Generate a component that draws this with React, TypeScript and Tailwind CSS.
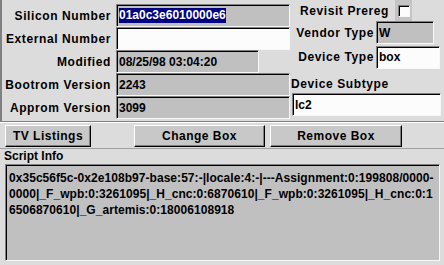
import React from 'react';

// sunken field look: dark top/left, light bottom/right
const sunken =
  'border border-t-[#808080] border-l-[#808080] border-b-[#f8f8f8] border-r-[#f8f8f8] shadow-[inset_1px_1px_0_#000]';
const raised =
  'border border-t-[#ffffff] border-l-[#ffffff] border-b-[#000] border-r-[#000] shadow-[inset_-1px_-1px_0_#808080]';

function Field({ value, width, white, selected }: { value: string; width: string; white?: boolean; selected?: boolean }) {
  return (
    <div className={`${width} h-[23px] ${sunken} ${white ? 'bg-[#fcfcfc]' : 'bg-[#c0c0c0]'} flex items-center pl-[2px]`}>
      {selected ? <span className="bg-[#000080] text-white leading-[15px]">{value}</span> : <span>{value}</span>}
    </div>
  );
}

const leftRows = [
  { label: 'Silicon Number', value: '01a0c3e6010000e6', width: 'w-[174px]', selected: true },
  { label: 'External Number', value: '', width: 'w-[174px]', white: true },
  { label: 'Modified', value: '08/25/98 03:04:20', width: 'w-[143px]' },
  { label: 'Bootrom Version', value: '2243', width: 'w-[174px]' },
  { label: 'Approm Version', value: '3099', width: 'w-[174px]' },
];

export default function App() {
  return (
    <div className="w-[444px] h-[265px] bg-[#dcdcdc] text-black font-bold text-[12px] font-['Liberation_Sans',Arial,sans-serif] overflow-hidden flex flex-col">
      {/* top panel */}
      <div className="flex h-[122px] border-l-2 border-l-[#808080] border-b border-b-[#808080] shadow-[0_1px_0_#fff]">
        <div className="w-[289px] pt-[4px] flex flex-col">
          {leftRows.map((r) => (
            <div key={r.label} className="flex items-center h-[23px]">
              <div className="w-[114px] text-right pr-[5px] tracking-[0.6px]">{r.label}</div>
              <Field value={r.value} width={r.width} white={r.white} selected={r.selected} />
            </div>
          ))}
        </div>
        <div className="flex-1 flex flex-col">
          <div className="flex items-center h-[21px]">
            <div className="w-[104px] text-right pr-[6px] tracking-[0.6px]">Revisit Prereg</div>
            <div className="w-[17px] h-[21px] bg-[#c4c4c4] flex items-center justify-center">
              <div className={`w-[12px] h-[12px] bg-[#fcfcfc] ${sunken}`} />
            </div>
          </div>
          <div className="flex items-center h-[23px]">
            <div className="w-[85px] text-right pr-[2px] tracking-[0.6px]">Vendor Type</div>
            <Field value="W" width="w-[58px]" />
          </div>
          <div className="flex items-center h-[24px] mt-[1px]">
            <div className="w-[85px] text-right pr-[2px] tracking-[0.6px]">Device Type</div>
            <Field value="box" width="w-[64px]" white />
          </div>
          <div className="h-[23px] flex items-center pt-[6px] tracking-[0.6px]">Device Subtype</div>
          <div className="pl-[1px] pt-[1px]">
            <Field value="lc2" width="w-[149px]" white />
          </div>
        </div>
      </div>

      {/* buttons */}
      <div className="flex items-center h-[27px] pl-[5px] pt-[1px] border-b border-b-[#a0a0a0]">
        <button className={`w-[86px] h-[22px] bg-[#c8c8c8] ${raised} tracking-[0.5px]`}>TV Listings</button>
        <button className={`ml-[43px] w-[131px] h-[22px] bg-[#c8c8c8] ${raised} tracking-[0.5px]`}>Change Box</button>
        <button className={`ml-[5px] w-[132px] h-[22px] bg-[#c8c8c8] ${raised} tracking-[0.5px]`}>Remove Box</button>
      </div>

      {/* script info */}
      <div className="flex-1 flex flex-col pl-[3px] pr-[4px]">
        <div className="h-[15px] leading-[15px] pl-[1px]">Script Info</div>
        <div className={`ml-[2px] h-[97px] bg-[#c0c0c0] ${sunken} pl-[3px] pt-[5px] leading-[16px] whitespace-nowrap tracking-[0.05px]`}>
          <div>0x35c56f5c-0x2e108b97-base:57:-|locale:4:-|---Assignment:0:199808/0000-</div>
          <div>0000|_F_wpb:0:3261095|_H_cnc:0:6870610|_F_wpb:0:3261095|_H_cnc:0:1</div>
          <div>6506870610|_G_artemis:0:18006108918</div>
        </div>
      </div>
    </div>
  );
}
